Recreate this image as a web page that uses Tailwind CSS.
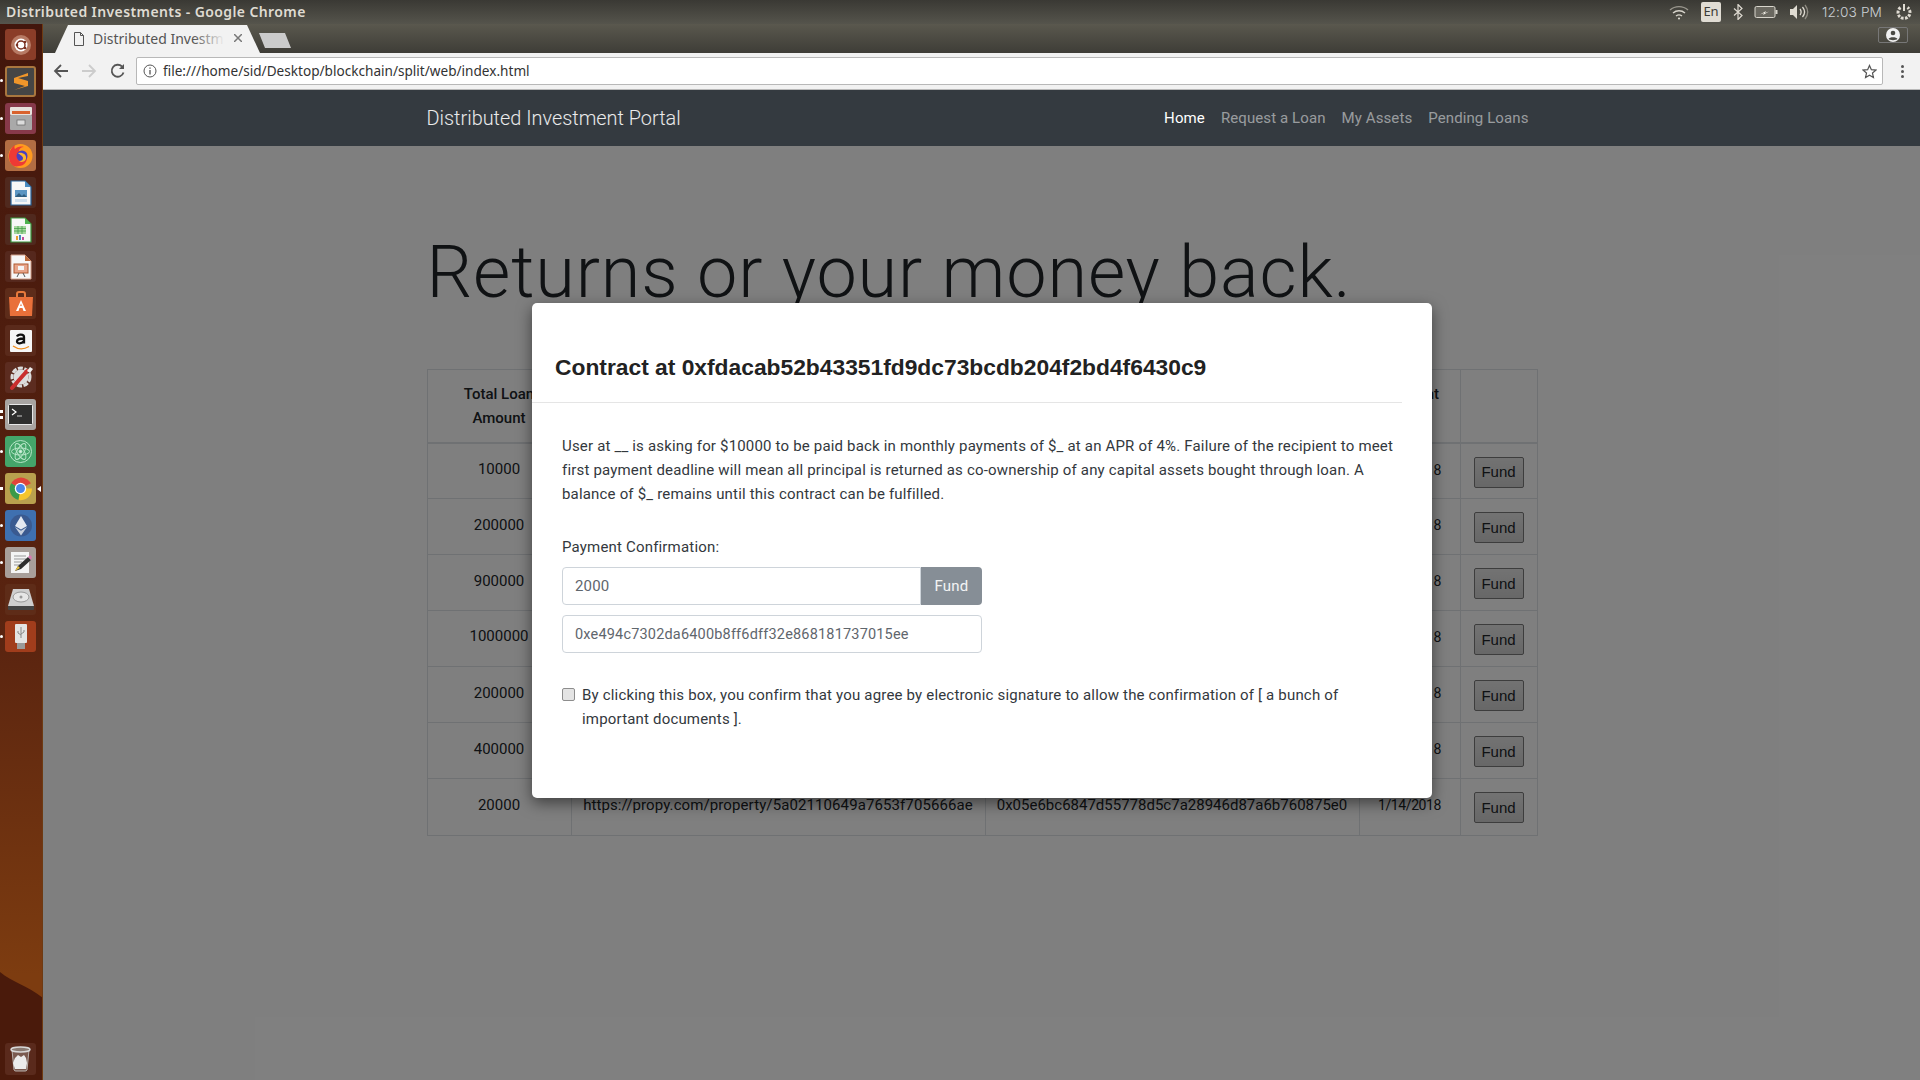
<!DOCTYPE html>
<html><head><meta charset="utf-8"><title>Distributed Investments</title>
<script src="https://cdn.jsdelivr.net/npm/@tailwindcss/browser@4"></script></head>
<body class="w-[1920px] h-[1080px] overflow-hidden bg-white font-['Roboto',sans-serif] text-[#212529]">
<div class="h-[24px] flex items-start justify-between bg-[linear-gradient(#3a3934,#55544c)] pl-[6px] pr-[7px] text-[14px] text-[#dfdbd2] font-['Noto_Sans',sans-serif]">
  <span class="font-semibold tracking-[0.4px] leading-[23px]">Distributed Investments - Google Chrome</span>
  <div class="flex items-center h-[24px]">
    <svg class="w-[20px] h-[16px] mr-[12px]" viewBox="0 0 20 16" fill="none" stroke="#d8d5cc" stroke-width="1.4"><path d="M1 6c5-4.500 13-4.500 18 0" stroke="#9a978e"/><path d="M4 9c3.500-3 8.500-3 12 0"/><path d="M7 12c2-1.500 4-1.500 6 0"/><circle cx="10" cy="14.500" r="1" fill="#e8e5dc" stroke="none"/></svg>
    <span class="w-[20px] h-[20px] rounded-[2px] bg-[#e0dcd3] text-[#3c3b37] text-[13px] flex items-center justify-center mr-[12px]">En</span>
    <svg class="w-[10px] h-[16px] mr-[11px]" viewBox="0 0 10 16" fill="none" stroke="#dfdbd2" stroke-width="1.200"><path d="M1 4.500l8 7-4 4V.5l4 4-8 7"/></svg>
    <svg class="w-[24px] h-[14px] mr-[11px]" viewBox="0 0 24 14" fill="none"><rect x="1" y="1.500" width="20" height="11" rx="1.500" stroke="#d8d5cc" fill="#6a6860"/><rect x="21.500" y="5" width="2" height="4" fill="#d8d5cc"/><path d="M6 9.500l6-3.500-1 2 4-1.500-6 3.500 1-2z" fill="#f0ede4"/></svg>
    <svg class="w-[20px] h-[16px] mr-[13px]" viewBox="0 0 20 16" fill="none"><path d="M1 5h3l4-4v14l-4-4H1z" fill="#dfdbd2"/><path d="M11 5c1.500 2 1.500 4 0 6M13.500 3c2.500 3 2.500 7 0 10" stroke="#dfdbd2" stroke-width="1.300"/><path d="M16 1c3.500 4.500 3.500 9.500 0 14" stroke="#8f8c83" stroke-width="1.300"/></svg>
    <span class="text-[13.700px] text-[#c9ced3] font-['Inter',sans-serif] font-light mr-[13px] tracking-[0.1px]">12:03 PM</span>
    <svg class="w-[18px] h-[18px]" viewBox="0 0 18 18" fill="none" stroke="#dfdbd2"><path d="M9 1v7" stroke-width="2"/><path d="M5.500 4.500a6 6 0 1 0 7 0" stroke-width="3" stroke-dasharray="2.600 1.300"/></svg>
  </div>
</div>
<div class="flex h-[1056px]">
  <aside class="relative w-[43px] shrink-0 bg-[linear-gradient(#42160c_0%,#5a2410_58%,#7d3c10_90%)] border-r border-r-[#6e3a12] overflow-hidden">
    <svg class="absolute left-0 top-[920px] w-[43px] h-[136px]" viewBox="0 0 43 136" preserveAspectRatio="none"><path d="M0 28C12 38 28 42 43 54V136H0z" fill="#4a1a0b"/></svg>
    <div class="relative flex flex-col gap-[6px] pt-[5px] pl-[5px]">
      <!-- ubuntu --><div class="relative w-[31px] h-[31px] rounded-[3px] bg-[#8a3d28] flex items-center justify-center"><svg class="w-[22px] h-[22px]" viewBox="0 0 22 22"><circle cx="11" cy="11" r="10" fill="#b77a64"/><circle cx="11" cy="11" r="6.500" fill="#fff"/><circle cx="11" cy="11" r="4" fill="none" stroke="#7a3020" stroke-width="1.500"/><circle cx="15" cy="8" r="1.300" fill="#7a3020"/><circle cx="15" cy="14" r="1.300" fill="#7a3020"/><circle cx="7" cy="11" r="1.300" fill="#7a3020"/></svg></div>
      <!-- sublime --><div class="relative w-[31px] h-[31px] rounded-[3px] bg-[#454545] border-2 border-[#a9773f] flex items-center justify-center"><i class="absolute left-[-7px] top-[11px] w-[3px] h-[3px] bg-white rounded-full"></i><svg class="w-[20px] h-[22px]" viewBox="0 0 20 22"><path d="M17 2L3 7v5l11 3-11 4 14-4v-5L7 7l10-2z" fill="#f0962a"/></svg></div>
      <!-- files --><div class="relative w-[31px] h-[31px] rounded-[3px] bg-[#87394a] flex items-center justify-center"><i class="absolute left-[-5px] top-[14px] w-[3px] h-[3px] bg-white rounded-full"></i><svg class="w-[24px] h-[25px]" viewBox="0 0 24 25"><rect x="1" y="1" width="22" height="8" rx="1" fill="#e8e2dc"/><rect x="3" y="5" width="18" height="3" fill="#d9622d"/><rect x="1" y="9" width="22" height="15" rx="1" fill="#a9a9a9"/><rect x="8" y="14" width="8" height="5" fill="#dcdcdc" stroke="#666" stroke-width=".7"/></svg></div>
      <!-- firefox --><div class="relative w-[31px] h-[31px] rounded-[3px] bg-[#b26d43] flex items-center justify-center"><i class="absolute left-[-5px] top-[14px] w-[3px] h-[3px] bg-white rounded-full"></i><svg class="w-[27px] h-[27px]" viewBox="0 0 27 27"><circle cx="13.500" cy="14" r="12" fill="#ff9a1f"/><path d="M2 14c0-5 3-9 6-11-1 2-.5 3 0 4 2-2 5-3 9-2-3 0-5 2-5 4 2 1 6 1 8 5 1 5-3 10-8 10C6 26 2 21 2 14z" fill="#ee3a35"/><circle cx="15" cy="14" r="5.500" fill="#4a3fc0"/><path d="M11 11c4-1 9 1 8 6-1 3-5 4-7 2 3 0 4-1 4-3s-3-3-5-5z" fill="#ffb52a"/></svg></div>
      <!-- writer --><div class="w-[31px] h-[31px] rounded-[3px] bg-[#50291e] flex items-center justify-center"><svg class="w-[22px] h-[26px]" viewBox="0 0 22 26"><path d="M1 1h14l6 6v18H1z" fill="#f7f7f7" stroke="#27649c" stroke-width="1.200"/><path d="M15 1l6 6h-6z" fill="#4a8bc0"/><rect x="5" y="10" width="12" height="7" fill="#5b95c2"/><path d="M5 17l4-4 3 3 2-2 3 3z" fill="#2e5d7f"/><rect x="5" y="19" width="12" height="3" fill="#cfe0ee"/></svg></div>
      <!-- calc --><div class="w-[31px] h-[31px] rounded-[3px] bg-[#50291e] flex items-center justify-center"><svg class="w-[22px] h-[26px]" viewBox="0 0 22 26"><path d="M1 1h14l6 6v18H1z" fill="#f7f7f7" stroke="#3a9a3f" stroke-width="1.200"/><path d="M15 1l6 6h-6z" fill="#4fb24f"/><path d="M4 9h12v8H4z" fill="#a8d8a0"/><path d="M4 11.500h12M4 14h12M8 9v8M12 9v8" stroke="#3a9a3f" stroke-width=".7"/><rect x="6" y="19" width="2" height="4" fill="#e8a030"/><rect x="9" y="18" width="2" height="5" fill="#4a8bc0"/><rect x="12" y="20" width="2" height="3" fill="#c04a9a"/></svg></div>
      <!-- impress --><div class="w-[31px] h-[31px] rounded-[3px] bg-[#55281d] flex items-center justify-center"><svg class="w-[22px] h-[26px]" viewBox="0 0 22 26"><path d="M1 1h14l6 6v18H1z" fill="#f7f7f7" stroke="#d4a08a" stroke-width="1"/><path d="M15 1l6 6h-6z" fill="#bb6a3a"/><rect x="4" y="10" width="14" height="9" fill="#e8a58a" stroke="#b05a30"/><rect x="8" y="12" width="6" height="4" fill="#f5f5f5"/><path d="M9 19l-2 4M13 19l2 4" stroke="#555"/></svg></div>
      <!-- store --><div class="w-[31px] h-[31px] rounded-[3px] bg-[#5d2c1a] flex items-center justify-center"><svg class="w-[26px] h-[26px]" viewBox="0 0 26 26"><path d="M9 6V3c0-1 1-2 2-2h4c1 0 2 1 2 2v3" fill="none" stroke="#e87a3c" stroke-width="2"/><path d="M1 6h24l-1 19H2z" fill="#e9703a"/><path d="M13 9l-5 11h2.500l1-3h3l1 3H18zM12.200 15l.8-2.500.8 2.500z" fill="#fff"/></svg></div>
      <!-- amazon --><div class="w-[31px] h-[31px] rounded-[3px] bg-[#5a2a1b] flex items-center justify-center"><svg class="w-[22px] h-[22px]" viewBox="0 0 22 22"><rect width="22" height="22" rx="1" fill="#f6f6f6"/><path d="M7 6.500c1-2.500 7-2.500 7 .5v6.500M14 8.500c-4 0-7 .5-7 3s4.500 2.500 7-.5" fill="none" stroke="#111" stroke-width="2.300"/><path d="M3 16c5 3.500 11 3.500 16 .5" fill="none" stroke="#f08c1a" stroke-width="1.300"/></svg></div>
      <!-- settings --><div class="w-[31px] h-[31px] rounded-[3px] bg-[#5c2c20] flex items-center justify-center"><svg class="w-[27px] h-[27px]" viewBox="0 0 27 27"><circle cx="14" cy="13" r="9" fill="none" stroke="#dcdcdc" stroke-width="3" stroke-dasharray="5 1.500"/><circle cx="14" cy="13" r="7.500" fill="#ddd"/><path d="M5 24L20 7" stroke="#c92e2e" stroke-width="4" stroke-linecap="round"/><path d="M20 7l3-4 3 2-3 4" fill="#eee"/></svg></div>
      <!-- terminal --><div class="relative w-[31px] h-[31px] rounded-[3px] bg-[#a8a4a2] flex items-center justify-center"><i class="absolute left-[-5px] top-[11px] w-[3px] h-[3px] bg-white"></i><i class="absolute left-[-5px] top-[17px] w-[3px] h-[3px] bg-white"></i><svg class="w-[25px] h-[21px]" viewBox="0 0 25 21"><rect x=".5" y=".5" width="24" height="20" rx="1" fill="#2e2e2e" stroke="#e8e8e8"/><path d="M4 5l4 3-4 3" fill="none" stroke="#fff" stroke-width="1.200"/><path d="M9 12h5" stroke="#ccc"/></svg></div>
      <!-- atom --><div class="relative w-[31px] h-[31px] rounded-[3px] bg-[#44a56a] flex items-center justify-center"><i class="absolute left-[-5px] top-[14px] w-[3px] h-[3px] bg-white rounded-full"></i><svg class="w-[25px] h-[25px]" viewBox="0 0 25 25" fill="none" stroke="#b7e6c8"><circle cx="12.500" cy="12.500" r="11"/><ellipse cx="12.500" cy="12.500" rx="9" ry="3.500" transform="rotate(60 12.500 12.500)"/><ellipse cx="12.500" cy="12.500" rx="9" ry="3.500" transform="rotate(120 12.500 12.500)"/><ellipse cx="12.500" cy="12.500" rx="9" ry="3.500"/><circle cx="12.500" cy="12.500" r="1.500" fill="#d9f2e2"/></svg></div>
      <!-- chrome --><div class="relative w-[31px] h-[31px] rounded-[3px] bg-[#b9a04e] flex items-center justify-center"><i class="absolute left-[-5px] top-[14px] w-[3px] h-[3px] bg-white"></i><i class="absolute right-[-5px] top-[13px] w-0 h-0 border-y-[3px] border-y-transparent border-r-[4px] border-r-white"></i><svg class="w-[25px] h-[25px]" viewBox="0 0 24 24"><path d="M12 12L3 7A11 11 0 0 1 22 7z" fill="#e0443a"/><path d="M12 12H23A11 11 0 0 1 10 23z" fill="#f5c52c"/><path d="M12 12L10 23A11 11 0 0 1 3 7z" fill="#3a9a4a"/><circle cx="12" cy="12" r="5.500" fill="#fff"/><circle cx="12" cy="12" r="4.300" fill="#4a86e8"/></svg></div>
      <!-- ethereum --><div class="relative w-[31px] h-[31px] rounded-[3px] bg-[#3f70b0] flex items-center justify-center"><i class="absolute left-[-5px] top-[14px] w-[3px] h-[3px] bg-white rounded-full"></i><svg class="w-[24px] h-[25px]" viewBox="0 0 24 25"><circle cx="12" cy="12.500" r="11" fill="#3a5a90"/><path d="M12 3l6 10-6 3.500L6 13z" fill="#e4e8f0"/><path d="M12 17.800l6-3.700-6 8.400-6-8.400z" fill="#c6cfdd"/></svg></div>
      <!-- gedit --><div class="relative w-[31px] h-[31px] rounded-[3px] bg-[#a89f9a] flex items-center justify-center"><i class="absolute left-[-5px] top-[14px] w-[3px] h-[3px] bg-white rounded-full"></i><svg class="w-[25px] h-[25px]" viewBox="0 0 25 25"><rect x="3" y="2" width="18" height="21" fill="#f4f4f4"/><path d="M6 6h12M6 9h12M6 12h8M6 15h6" stroke="#999"/><path d="M7 21l3-5 10-9 3 3-10 9z" fill="#2e2e2e"/><path d="M20 7l3 3 1-3-2-2z" fill="#d77ab0"/><path d="M7 21l3-5 2 2z" fill="#e8c33c"/></svg></div>
      <!-- disk --><div class="w-[31px] h-[31px] rounded-[3px] bg-[#5e2c18] flex items-center justify-center"><svg class="w-[28px] h-[23px]" viewBox="0 0 28 23"><path d="M6 1h16l5 17H1z" fill="#cfcfcf"/><ellipse cx="14" cy="9" rx="8" ry="5" fill="#e6e6e6" stroke="#999"/><circle cx="14" cy="9" r="1.500" fill="#999"/><path d="M1 18h26v3a1 1 0 0 1-1 1H2a1 1 0 0 1-1-1z" fill="#444"/></svg></div>
      <!-- usb --><div class="relative w-[31px] h-[31px] rounded-[3px] bg-[#a13d1c] flex items-center justify-center"><i class="absolute left-[-5px] top-[14px] w-[3px] h-[3px] bg-white rounded-full"></i><svg class="w-[14px] h-[25px]" viewBox="0 0 14 25"><rect x="1" y="0" width="12" height="19" rx="1" fill="#e4e4e4"/><rect x="3" y="19" width="8" height="6" fill="#9a9a9a"/><path d="M7 3v11M4 7v2l3 2M10 6v2l-3 2" fill="none" stroke="#8a8a8a"/></svg></div>
    </div>
    <div class="absolute left-[5px] top-[1019px] w-[31px] h-[32px] rounded-[3px] bg-[#5a2a1c] flex items-center justify-center"><svg class="w-[21px] h-[26px]" viewBox="0 0 21 26"><path d="M2 4l2 20a2 2 0 0 0 2 1h9a2 2 0 0 0 2-1l2-20" fill="#7a5a50" stroke="#b8b0ac"/><ellipse cx="10.500" cy="3.500" rx="9.500" ry="2.500" fill="#8a7a72" stroke="#d8d8d8" stroke-width="1.500"/><path d="M5 12l3-3 3 2 3-2 2 3 1 5-1 6H5l-2-6z" fill="#ececec"/></svg></div>
  </aside>
  <div class="flex-1 min-w-0 flex flex-col">
    <div class="relative h-[29px] bg-[linear-gradient(#5a584e,#3e3d37)]">
      <svg class="absolute left-0 top-[1px] w-[300px] h-[28px]" viewBox="0 0 300 28"><path d="M12 28L25 0H204L217 28z" fill="#f2f2f2"/><path d="M216 8H242L248 23H222z" fill="#cbcbcb"/></svg>
      <svg class="absolute left-[30px] top-[8px] w-[12px] h-[14px]" viewBox="0 0 12 14" fill="none" stroke="#555"><path d="M1.500 .5h6l3 3v10h-9zM7.500 .5v3h3"/></svg>
      <span class="absolute left-[50px] top-[4px] w-[130px] overflow-hidden whitespace-nowrap text-[14px] text-[#555] font-['Noto_Sans',sans-serif]">Distributed Investments</span>
      <span class="absolute left-[150px] top-[4px] w-[32px] h-[22px] bg-[linear-gradient(90deg,#f2f2f200,#f2f2f2)]"></span>
      <svg class="absolute left-[191px] top-[10px] w-[8px] h-[8px]" viewBox="0 0 8 8" stroke="#777" stroke-width="1.500"><path d="M0 0l8 8M8 0L0 8"/></svg>
      <div class="absolute right-[12px] top-[3px] w-[30px] h-[16px] border border-[#777] rounded-[2px] flex items-center justify-center"><svg class="w-[14px] h-[14px]" viewBox="0 0 14 14"><circle cx="7" cy="7" r="7" fill="#f0f0f0"/><circle cx="7" cy="5" r="2.300" fill="#4a4a44"/><path d="M2.500 11c1-2.500 8-2.500 9 0-1.500 1.500-7.500 1.500-9 0z" fill="#4a4a44"/></svg></div>
    </div>
    <div class="h-[37px] bg-[#f2f2f2] border-b border-b-[#b9b9b9] flex items-center shrink-0">
      <svg class="w-[16px] h-[16px] ml-[10px]" viewBox="0 0 16 16" fill="none" stroke="#555" stroke-width="1.800"><path d="M15 8H2M8 2L2 8l6 6"/></svg>
      <svg class="w-[16px] h-[16px] ml-[12px]" viewBox="0 0 16 16" fill="none" stroke="#ccc" stroke-width="1.800"><path d="M1 8h13M8 2l6 6-6 6"/></svg>
      <svg class="w-[16px] h-[16px] ml-[13px]" viewBox="0 0 16 16" fill="none" stroke="#555" stroke-width="1.800"><path d="M13.500 9.500A6 6 0 1 1 12 3.500"/><path d="M14 1v5H9z" fill="#555" stroke="none"/></svg>
      <div class="flex items-center h-[28px] ml-[10px] w-[1747px] bg-white border border-[#b8b8b8] rounded-[2px]">
        <svg class="w-[14px] h-[14px] ml-[6px]" viewBox="0 0 14 14" fill="none" stroke="#555"><circle cx="7" cy="7" r="6"/><path d="M7 6v4.500M7 3.500v1.300" stroke-width="1.300"/></svg>
        <span class="ml-[6px] text-[13.600px] leading-[20px] text-[#333] font-['Noto_Sans',sans-serif] whitespace-nowrap">file:///home/sid/Desktop/blockchain/split/web/index.html</span>
        <svg class="w-[15px] h-[15px] ml-auto mr-[5px]" viewBox="0 0 16 16" fill="none" stroke="#555" stroke-width="1.300"><path d="M8 1.500l2 4.500 4.800.5-3.600 3.200 1 4.800L8 12l-4.200 2.500 1-4.800L1.200 6.500 6 6z"/></svg>
      </div>
      <div class="ml-[18px] flex flex-col gap-[2px]"><i class="w-[3px] h-[3px] rounded-full bg-[#555]"></i><i class="w-[3px] h-[3px] rounded-full bg-[#555]"></i><i class="w-[3px] h-[3px] rounded-full bg-[#555]"></i></div>
    </div>
    <nav class="relative z-20 h-[56px] bg-[#343a40] flex justify-center shrink-0">
      <div class="w-[1140px] px-[15px] flex items-center justify-between">
        <span class="text-[19.900px] font-light text-white/90 pt-[1px]">Distributed Investment Portal</span>
        <div class="flex gap-[16px] text-[15px] text-white/50 pr-[8px] tracking-[0.1px]"><span class="text-white">Home</span><span>Request a Loan</span><span>My Assets</span><span>Pending Loans</span></div>
      </div>
    </nav>
    <main class="relative flex-1 flex justify-center">
      <div class="w-[1140px] px-[15px]">
        <h1 class="mt-[84px] text-[72px] leading-[86px] font-light whitespace-nowrap tracking-[0.87px]">Returns or your money back.</h1>
        <table class="mt-[53px] w-[1110px] table-fixed border border-[#dee2e6] text-center text-[15px] leading-[24px]">
          <colgroup><col class="w-[144px]"><col class="w-[414px]"><col class="w-[374px]"><col class="w-[101px]"><col class="w-[77px]"></colgroup>
          <thead><tr class="h-[73px] border-b-2 border-[#dee2e6] align-top"><th class="border border-[#dee2e6] pt-[12px] font-medium">Total Loan<br>Amount</th><th class="border border-[#dee2e6]"></th><th class="border border-[#dee2e6]"></th><th class="border border-[#dee2e6] pt-[12px] font-medium">Payment</th><th class="border border-[#dee2e6]"></th></tr></thead>
          <tbody>
            <tr class="h-[56px] align-top"><td class="border border-[#dee2e6] pt-[13px]">10000</td><td class="border border-[#dee2e6]"></td><td class="border border-[#dee2e6]"></td><td class="border border-[#dee2e6] pt-[14px] text-[14px] tracking-[-0.4px]">1/14/2018</td><td class="border border-[#dee2e6] pt-[12px]"><button class="w-[50px] h-[31px] mt-px border border-[#7a7a7a] rounded-[2px] bg-[linear-gradient(#e6e6e6,#cfcfcf)] text-[15px] font-['Liberation_Sans',sans-serif]">Fund</button></td></tr>
            <tr class="h-[56px] align-top"><td class="border border-[#dee2e6] pt-[14px]">200000</td><td class="border border-[#dee2e6]"></td><td class="border border-[#dee2e6]"></td><td class="border border-[#dee2e6] pt-[14px] text-[14px] tracking-[-0.4px]">1/14/2018</td><td class="border border-[#dee2e6] pt-[12px]"><button class="w-[50px] h-[31px] mt-px border border-[#7a7a7a] rounded-[2px] bg-[linear-gradient(#e6e6e6,#cfcfcf)] text-[15px] font-['Liberation_Sans',sans-serif]">Fund</button></td></tr>
            <tr class="h-[56px] align-top"><td class="border border-[#dee2e6] pt-[14px]">900000</td><td class="border border-[#dee2e6]"></td><td class="border border-[#dee2e6]"></td><td class="border border-[#dee2e6] pt-[14px] text-[14px] tracking-[-0.4px]">1/14/2018</td><td class="border border-[#dee2e6] pt-[12px]"><button class="w-[50px] h-[31px] mt-px border border-[#7a7a7a] rounded-[2px] bg-[linear-gradient(#e6e6e6,#cfcfcf)] text-[15px] font-['Liberation_Sans',sans-serif]">Fund</button></td></tr>
            <tr class="h-[56px] align-top"><td class="border border-[#dee2e6] pt-[13px]">1000000</td><td class="border border-[#dee2e6]"></td><td class="border border-[#dee2e6]"></td><td class="border border-[#dee2e6] pt-[14px] text-[14px] tracking-[-0.4px]">1/14/2018</td><td class="border border-[#dee2e6] pt-[12px]"><button class="w-[50px] h-[31px] mt-px border border-[#7a7a7a] rounded-[2px] bg-[linear-gradient(#e6e6e6,#cfcfcf)] text-[15px] font-['Liberation_Sans',sans-serif]">Fund</button></td></tr>
            <tr class="h-[56px] align-top"><td class="border border-[#dee2e6] pt-[14px]">200000</td><td class="border border-[#dee2e6]"></td><td class="border border-[#dee2e6]"></td><td class="border border-[#dee2e6] pt-[14px] text-[14px] tracking-[-0.4px]">1/14/2018</td><td class="border border-[#dee2e6] pt-[12px]"><button class="w-[50px] h-[31px] mt-px border border-[#7a7a7a] rounded-[2px] bg-[linear-gradient(#e6e6e6,#cfcfcf)] text-[15px] font-['Liberation_Sans',sans-serif]">Fund</button></td></tr>
            <tr class="h-[56px] align-top"><td class="border border-[#dee2e6] pt-[14px]">400000</td><td class="border border-[#dee2e6]"></td><td class="border border-[#dee2e6]"></td><td class="border border-[#dee2e6] pt-[14px] text-[14px] tracking-[-0.4px]">1/14/2018</td><td class="border border-[#dee2e6] pt-[12px]"><button class="w-[50px] h-[31px] mt-px border border-[#7a7a7a] rounded-[2px] bg-[linear-gradient(#e6e6e6,#cfcfcf)] text-[15px] font-['Liberation_Sans',sans-serif]">Fund</button></td></tr>
            <tr class="h-[57px] align-top"><td class="border border-[#dee2e6] pt-[14px]">20000</td><td class="border border-[#dee2e6] pt-[14px] whitespace-nowrap overflow-hidden tracking-[0.1px]">https://propy.com/property/5a02110649a7653f705666ae</td><td class="border border-[#dee2e6] pt-[14px] whitespace-nowrap overflow-hidden">0x05e6bc6847d55778d5c7a28946d87a6b760875e0</td><td class="border border-[#dee2e6] pt-[14px] text-[14px] tracking-[-0.4px]">1/14/2018</td><td class="border border-[#dee2e6] pt-[12px]"><button class="w-[50px] h-[31px] mt-px border border-[#7a7a7a] rounded-[2px] bg-[linear-gradient(#e6e6e6,#cfcfcf)] text-[15px] font-['Liberation_Sans',sans-serif]">Fund</button></td></tr>
          </tbody>
        </table>
      </div>
      <div class="absolute inset-0 bg-black/50"></div>
      <section class="absolute left-[489px] top-[157px] w-[900px] h-[495px] bg-white rounded-[5px] shadow-[0_5px_15px_rgba(0,0,0,0.5)]">
        <header class="w-[870px] h-[100px] border-b border-b-[#e5e5e5] pl-[23px] pt-[50px]">
          <h2 class="font-['Liberation_Sans',sans-serif] font-bold text-[22.800px] leading-[28px] text-[#222]">Contract at 0xfdacab52b43351fd9dc73bcdb204f2bd4f6430c9</h2>
        </header>
        <div class="px-[30px] pt-[30px] text-[15px] leading-[24px] whitespace-nowrap text-[#33383d] tracking-[0.18px]">
          <p class="pt-[1px] -mb-[1px]">User at __ is asking for $10000 to be paid back in monthly payments of $_ at an APR of 4%. Failure of the recipient to meet<br>first payment deadline will mean all principal is returned as co-ownership of any capital assets bought through loan. A<br>balance of $_ remains until this contract can be fulfilled.</p>
          <p class="mt-[30px]">Payment Confirmation:</p>
          <div class="mt-[8px] flex w-[420px] h-[38px]">
            <input class="flex-1 min-w-0 border border-[#ced4da] rounded-l-[4px] px-[12px] text-[15px] text-[#5f666d]" value="2000">
            <button class="w-[61px] bg-[#868e96] text-white/90 rounded-r-[4px] text-[15px]">Fund</button>
          </div>
          <input class="mt-[10px] block w-[420px] h-[38px] border border-[#ced4da] rounded-[4px] px-[12px] text-[14.500px] text-[#5f666d]" value="0xe494c7302da6400b8ff6dff32e868181737015ee">
          <label class="mt-[30px] flex">
            <input type="checkbox" class="appearance-none w-[13px] h-[13px] mt-[5px] mr-[7px] shrink-0 bg-[#e4e4e4] border border-[#8d8d8d] rounded-[2px]">
            <span>By clicking this box, you confirm that you agree by electronic signature to allow the confirmation of [ a bunch of<br>important documents ].</span>
          </label>
        </div>
      </section>
    </main>
  </div>
</div>
</body></html>
